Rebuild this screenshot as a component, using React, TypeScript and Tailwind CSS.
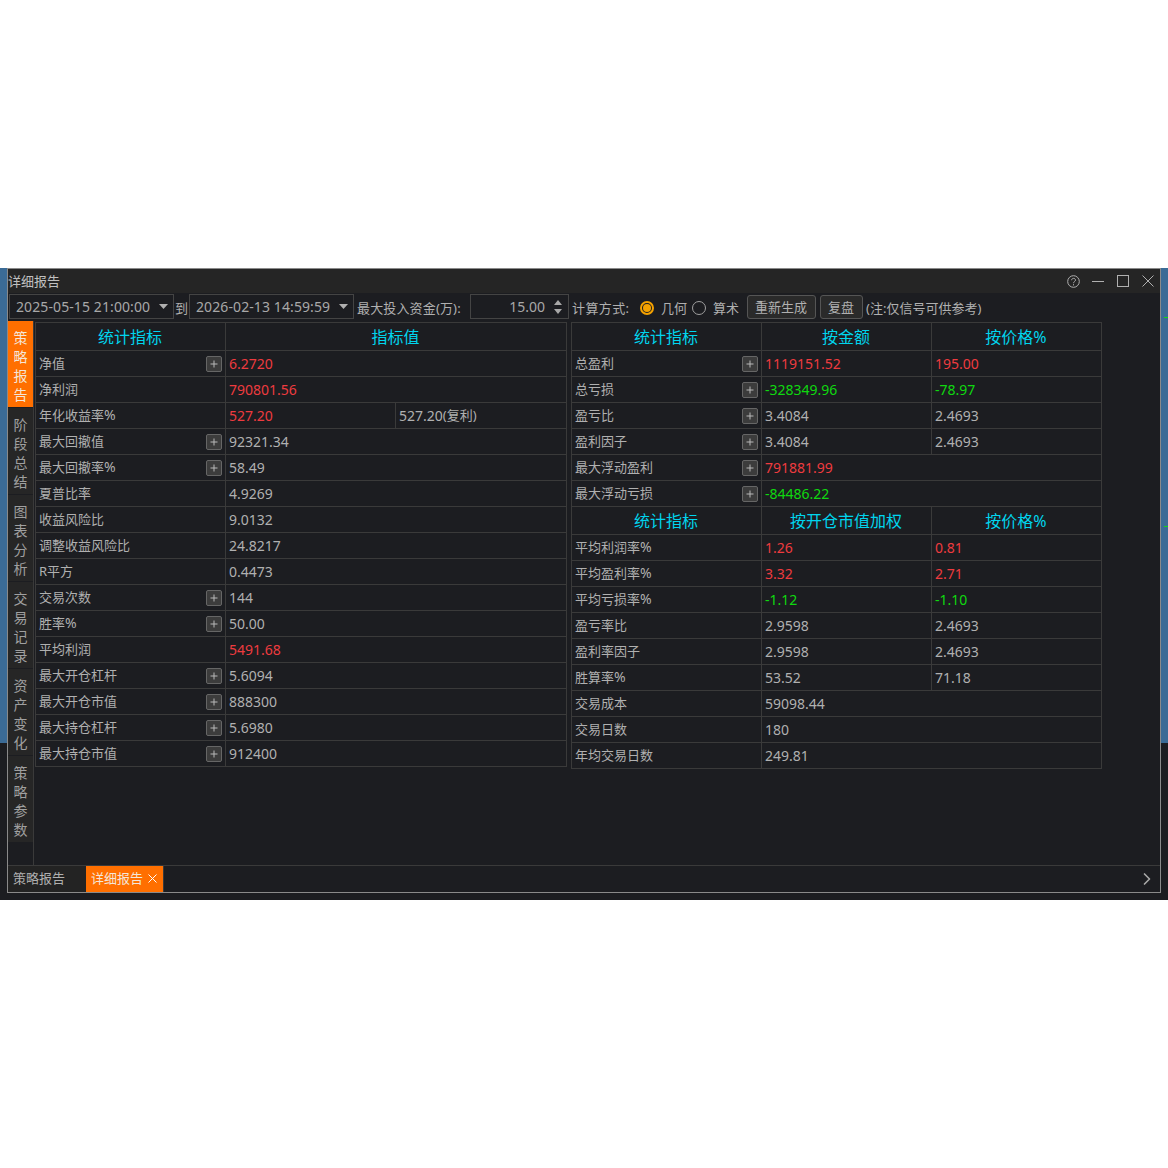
import React from "react";
import { ChevronRight } from "lucide-react";

type Tone = "red" | "green" | "gray";

const toneClass: Record<Tone, string> = {
  red: "text-[#ee3b3f]",
  green: "text-[#0fd80f]",
  gray: "text-[#b0b0b0]",
};

const navItems = ["策略报告", "阶段总结", "图表分析", "交易记录", "资产变化", "策略参数"];

const leftRows: { label: string; plus?: boolean; value: string; tone?: Tone }[] = [
  { label: "净值", plus: true, value: "6.2720", tone: "red" },
  { label: "净利润", value: "790801.56", tone: "red" },
  { label: "年化收益率%", value: "527.20", tone: "red" },
  { label: "最大回撤值", plus: true, value: "92321.34" },
  { label: "最大回撤率%", plus: true, value: "58.49" },
  { label: "夏普比率", value: "4.9269" },
  { label: "收益风险比", value: "9.0132" },
  { label: "调整收益风险比", value: "24.8217" },
  { label: "R平方", value: "0.4473" },
  { label: "交易次数", plus: true, value: "144" },
  { label: "胜率%", plus: true, value: "50.00" },
  { label: "平均利润", value: "5491.68", tone: "red" },
  { label: "最大开仓杠杆", plus: true, value: "5.6094" },
  { label: "最大开仓市值", plus: true, value: "888300" },
  { label: "最大持仓杠杆", plus: true, value: "5.6980" },
  { label: "最大持仓市值", plus: true, value: "912400" },
];

type RightRow = { label: string; plus?: boolean; a: string; b?: string; tone?: Tone };

const amountRows: RightRow[] = [
  { label: "总盈利", plus: true, a: "1119151.52", b: "195.00", tone: "red" },
  { label: "总亏损", plus: true, a: "-328349.96", b: "-78.97", tone: "green" },
  { label: "盈亏比", plus: true, a: "3.4084", b: "2.4693" },
  { label: "盈利因子", plus: true, a: "3.4084", b: "2.4693" },
  { label: "最大浮动盈利", plus: true, a: "791881.99", tone: "red" },
  { label: "最大浮动亏损", plus: true, a: "-84486.22", tone: "green" },
];

const weightedRows: RightRow[] = [
  { label: "平均利润率%", a: "1.26", b: "0.81", tone: "red" },
  { label: "平均盈利率%", a: "3.32", b: "2.71", tone: "red" },
  { label: "平均亏损率%", a: "-1.12", b: "-1.10", tone: "green" },
  { label: "盈亏率比", a: "2.9598", b: "2.4693" },
  { label: "盈利率因子", a: "2.9598", b: "2.4693" },
  { label: "胜算率%", a: "53.52", b: "71.18" },
  { label: "交易成本", a: "59098.44" },
  { label: "交易日数", a: "180" },
  { label: "年均交易日数", a: "249.81" },
];

const PlusButton = () => (
  <div className="w-4 h-4 rounded-[2px] border border-[#666666] bg-[#3c3c3c] flex items-center justify-center shrink-0">
    <svg width="8" height="8" viewBox="0 0 8 8" fill="none" stroke="#b8b8b8" strokeWidth="1">
      <path d="M4 .5v7M.5 4h7" />
    </svg>
  </div>
);

const LabelCell = ({ label, plus }: { label: string; plus?: boolean }) => (
  <div className="w-[190px] h-full border-r border-[#3a3a3a] flex items-center justify-between pl-[3px] pr-[3px] text-[13px] text-[#b0b0b0]">
    <span className="leading-[19px]">
      {label.replace("%", "")}
      {label.endsWith("%") && <span className="text-[14px] leading-none">%</span>}
    </span>
    {plus && <PlusButton />}
  </div>
);

const HeadCell = ({ className, children }: { className: string; children: React.ReactNode }) => (
  <div className={`${className} h-full border-r border-[#3a3a3a] flex items-center justify-center pr-px text-[16px] text-[#00d5ee]`}>
    {children}
  </div>
);

const ValueCell = ({ className, tone = "gray", children }: { className: string; tone?: Tone; children: React.ReactNode }) => (
  <div className={`${className} h-full border-r border-[#3a3a3a] flex items-center pl-[3px] text-[14px] ${toneClass[tone]}`}>
    {children}
  </div>
);

const LeftTable = () => (
  <div className="w-[532px] border-l border-t border-[#3a3a3a] self-start">
    <div className="flex h-[28px] border-b border-[#3a3a3a]">
      <HeadCell className="w-[190px]">统计指标</HeadCell>
      <HeadCell className="w-[341px]">指标值</HeadCell>
    </div>
    {leftRows.map((row) => (
      <div key={row.label} className="flex h-[26px] border-b border-[#3a3a3a]">
        <LabelCell label={row.label} plus={row.plus} />
        {row.label === "年化收益率%" ? (
          <>
            <ValueCell className="w-[170px]" tone="red">{row.value}</ValueCell>
            <ValueCell className="w-[171px]">
              527.20<span className="text-[13px]">(复利)</span>
            </ValueCell>
          </>
        ) : (
          <ValueCell className="w-[341px]" tone={row.tone}>{row.value}</ValueCell>
        )}
      </div>
    ))}
  </div>
);

const RightSection = ({ heads, rows }: { heads: string[]; rows: RightRow[] }) => (
  <>
    <div className="flex h-[28px] border-b border-[#3a3a3a]">
      <HeadCell className="w-[190px]">{heads[0]}</HeadCell>
      <HeadCell className="w-[170px]">{heads[1]}</HeadCell>
      <HeadCell className="w-[170px]">{heads[2]}</HeadCell>
    </div>
    {rows.map((row) => (
      <div key={row.label} className="flex h-[26px] border-b border-[#3a3a3a]">
        <LabelCell label={row.label} plus={row.plus} />
        {row.b ? (
          <>
            <ValueCell className="w-[170px]" tone={row.tone}>{row.a}</ValueCell>
            <ValueCell className="w-[170px]" tone={row.tone}>{row.b}</ValueCell>
          </>
        ) : (
          <ValueCell className="w-[340px]" tone={row.tone}>{row.a}</ValueCell>
        )}
      </div>
    ))}
  </>
);

const DateSelect = ({ value }: { value: string }) => (
  <div className="w-[165px] h-[25px] border border-[#444444] flex items-center justify-between pl-[6px] pr-[5px] text-[14px] tracking-[0.1px] text-[#a8a8a8]">
    <span>{value}</span>
    <svg width="9" height="5" viewBox="0 0 9 5" fill="#b0b0b0">
      <path d="M0 0h9L4.5 5z" />
    </svg>
  </div>
);

const ToolButton = ({ className, children }: { className: string; children: React.ReactNode }) => (
  <div className={`${className} h-[24px] rounded-[3px] border border-[#555555] bg-[#2a2a2a] flex items-center justify-center pt-px pr-px text-[13px] text-[#b0b0b0]`}>
    {children}
  </div>
);

const Radio = ({ on }: { on?: boolean }) =>
  on ? (
    <div className="w-[14px] h-[14px] rounded-full border-2 border-[#f5a200] flex items-center justify-center">
      <div className="w-2 h-2 rounded-full bg-[#f5a200]" />
    </div>
  ) : (
    <div className="w-[14px] h-[14px] rounded-full border border-[#a0a0a0]" />
  );

const TitleBar = () => (
  <div className="h-[24px] bg-[#252525] flex items-center justify-between text-[13px] text-[#c0c0c0]">
    <span className="pt-[2px]">详细报告</span>
    <div className="flex items-center text-[#b0b0b0]">
      <svg width="13" height="13" viewBox="0 0 13 13" fill="none" stroke="currentColor" strokeWidth="1" className="mr-[12px]">
        <circle cx="6.5" cy="6.5" r="5.8" />
        <path d="M4.6 5.2c0-2.4 3.9-2.4 3.9-.1 0 1.4-2 1.5-2 3.1M6.5 9.2v1.2" />
      </svg>
      <div className="w-[12px] h-px bg-current mr-[13px]" />
      <div className="w-[12px] h-[12px] border border-current mr-[13px]" />
      <svg width="12" height="12" viewBox="0 0 12 12" fill="none" stroke="currentColor" strokeWidth="1" className="mr-[6px]">
        <path d="M.5.5l11 11M11.5.5l-11 11" />
      </svg>
    </div>
  </div>
);

const Toolbar = () => (
  <div className="h-[28px] flex items-start pt-px pl-px text-[13px] text-[#b0b0b0]">
    <DateSelect value="2025-05-15 21:00:00" />
    <span className="w-[15px] text-center leading-[28px]">到</span>
    <DateSelect value="2026-02-13 14:59:59" />
    <span className="ml-[3px] w-[113px] leading-[28px] tracking-[0.15px]">最大投入资金(万):</span>
    <div className="w-[99px] h-[25px] border border-[#444444] flex items-center justify-end pr-[5px] text-[14px] text-[#a8a8a8]">
      <span className="mr-[8px]">15.00</span>
      <svg width="10" height="14" viewBox="0 0 10 14" fill="#a8a8a8">
        <path d="M5 0l4 5H1zM5 14L1 9h8z" />
      </svg>
    </div>
    <span className="ml-[3px] w-[68px] leading-[28px] tracking-[0.4px]">计算方式:</span>
    <div className="h-[27px] flex items-center">
      <Radio on />
    </div>
    <span className="ml-[7px] w-[31px] leading-[28px]">几何</span>
    <div className="h-[27px] flex items-center">
      <Radio />
    </div>
    <span className="ml-[7px] w-[34px] leading-[28px]">算术</span>
    <ToolButton className="w-[69px] mt-px">重新生成</ToolButton>
    <ToolButton className="w-[43px] ml-[4px] mt-px">复盘</ToolButton>
    <span className="ml-[3px] leading-[28px]">(注:仅信号可供参考)</span>
  </div>
);

const SideNav = () => (
  <div className="w-[26px] border-r border-[#3a3a3a] shrink-0">
    {navItems.map((item, i) => (
      <div
        key={item}
        className={`h-[87px] pt-[7px] border-b border-[#1c1d21] ${i === 0 ? "bg-[#ff6f00] text-[#f4e6d8]" : "bg-[#262626] text-[#a0a0a0]"}`}
      >
        <div className="w-[14px] mx-auto text-[14px] leading-[19px] break-all text-center">{item}</div>
      </div>
    ))}
  </div>
);

const TabBar = () => (
  <div className="h-[27px] border-t border-[#3a3a3a] flex items-center text-[13px]">
    <div className="w-[78px] h-full bg-[#232323] text-[#b0b0b0] flex items-center pl-[5px]">策略报告</div>
    <div className="w-[78px] h-full bg-[#ff6f00] text-[#f4e6d8] flex items-center pl-[5px] gap-[5px] border-r border-[#3a3a3a]">
      详细报告
      <svg width="9" height="9" viewBox="0 0 9 9" fill="none" stroke="#ffffff" strokeWidth="1" className="mb-[2px] shrink-0">
        <path d="M.5.5l8 8M8.5.5l-8 8" />
      </svg>
    </div>
    <ChevronRight size={20} strokeWidth={2} className="ml-auto mr-[3px] text-[#a8a8a8]" />
  </div>
);

export default function App() {
  return (
    <div className="w-[1168px] h-[1168px] bg-white pt-[268px] font-['Noto_Sans','Noto_Sans_CJK_SC',sans-serif]">
      <div className="h-[632px] bg-[#1c1d21] flex items-start">
        <div className="w-[7px] h-[475px] bg-[#3b6b96] shrink-0" />
        <div className="w-[1154px] h-[625px] border border-[#8a8a8a] flex flex-col shrink-0">
          <TitleBar />
          <Toolbar />
          <div className="h-[544px] flex">
            <SideNav />
            <div className="flex pl-px pt-px gap-[4px]">
              <LeftTable />
              <div className="w-[531px] border-l border-t border-[#3a3a3a] self-start">
                <RightSection heads={["统计指标", "按金额", "按价格%"]} rows={amountRows} />
                <RightSection heads={["统计指标", "按开仓市值加权", "按价格%"]} rows={weightedRows} />
              </div>
            </div>
          </div>
          <TabBar />
        </div>
        <div className="w-[7px] h-[475px] bg-[#3b6b96] shrink-0 pl-[3px]">
          <div className="h-px bg-[#14d814] mt-[49px]" />
          <div className="h-px bg-[#14d814] mt-[208px]" />
        </div>
      </div>
    </div>
  );
}
